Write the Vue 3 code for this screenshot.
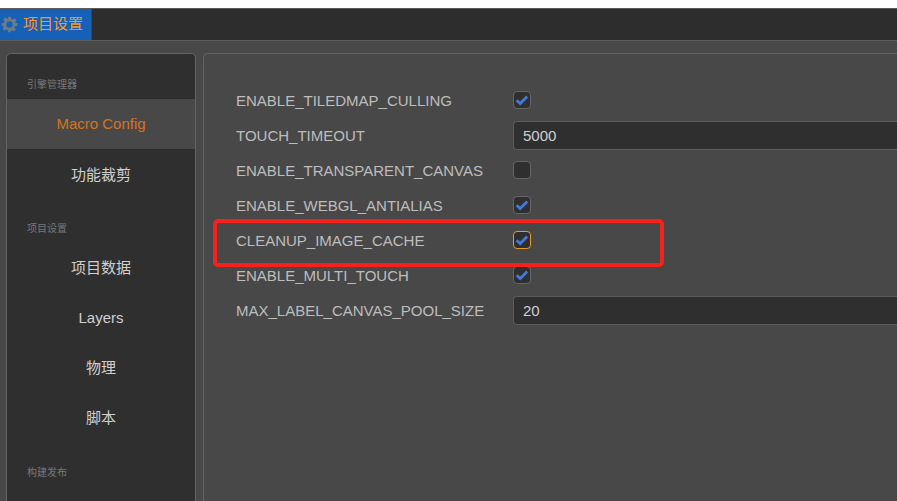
<template>
  <div class="page">
    <div class="top-strip"></div>
    <div class="tabbar">
      <div class="tab">
        <svg class="gear" viewBox="0 0 24 24" width="17" height="17">
          <path
            fill="#6f7c88"
            fill-rule="evenodd"
            d="M10 1h4l.6 3.1 1.9.8 2.6-1.8 2.8 2.8-1.8 2.6.8 1.9L23 10v4l-3.1.6-.8 1.9 1.8 2.6-2.8 2.8-2.6-1.8-1.9.8L13.9 23h-3.8l-.6-3.1-1.9-.8-2.6 1.8-2.8-2.8 1.8-2.6-.8-1.9L1 14v-4l3.1-.6.8-1.9-1.8-2.6 2.8-2.8 2.6 1.8 1.9-.8zM12 7.5a4.5 4.5 0 1 0 0 9 4.5 4.5 0 0 0 0-9z"
          />
        </svg>
        <span>项目设置</span>
      </div>
    </div>
    <div class="body">
      <aside class="sidebar">
        <template v-for="group in groups" :key="group.title">
          <h4>{{ group.title }}</h4>
          <div
            v-for="item in group.items"
            :key="item"
            class="nav-item"
            :class="{ active: item === 'Macro Config', cjk: isCjk(item) }"
          >
            {{ item }}
          </div>
        </template>
      </aside>
      <main class="panel">
        <div v-for="row in rows" :key="row.name" class="row">
          <label>{{ row.name }}</label>
          <div v-if="row.value" class="input">{{ row.value }}</div>
          <div v-else class="check" :class="{ focus: row.focus }">
            <svg v-if="row.checked" viewBox="0 0 18 18" width="18" height="18">
              <path
                d="M3.6 9.2l3.6 3.4 7-7.2"
                fill="none"
                stroke="#4379dc"
                stroke-width="2.8"
              />
            </svg>
          </div>
        </div>
      </main>
      <div class="highlight"></div>
    </div>
  </div>
</template>

<script setup>
const groups = [
  { title: "引擎管理器", items: ["Macro Config", "功能裁剪"] },
  { title: "项目设置", items: ["项目数据", "Layers", "物理", "脚本"] },
  { title: "构建发布", items: [] },
];

const rows = [
  { name: "ENABLE_TILEDMAP_CULLING", checked: true },
  { name: "TOUCH_TIMEOUT", value: "5000" },
  { name: "ENABLE_TRANSPARENT_CANVAS", checked: false },
  { name: "ENABLE_WEBGL_ANTIALIAS", checked: true },
  { name: "CLEANUP_IMAGE_CACHE", checked: true, focus: true },
  { name: "ENABLE_MULTI_TOUCH", checked: true },
  { name: "MAX_LABEL_CANVAS_POOL_SIZE", value: "20" },
];

const isCjk = (text) => /[^\x00-\x7f]/.test(text);
</script>

<style scoped>
.page {
  width: 897px;
  height: 501px;
  overflow: hidden;
  display: flex;
  flex-direction: column;
  background: #484848;
  font-family: "Liberation Sans", "Noto Sans CJK SC", sans-serif;
}
.top-strip {
  height: 8px;
  background: #fff;
}
.tabbar {
  height: 33px;
  flex: none;
  box-sizing: border-box;
  display: flex;
  background: #2d2d2d;
  border-top: 1px solid #5a5a5a;
  border-bottom: 1px solid #5e5e5e;
}
.tab {
  width: 92px;
  display: flex;
  align-items: center;
  gap: 5px;
  padding: 0 0 4px 1px;
  box-sizing: border-box;
  background: #1760b8;
  border-right: 1px solid #444;
  color: #f79a1e;
  font-size: 15px;
}
.gear {
  margin-top: 4px;
}
.body {
  position: relative;
  flex: 1;
  display: flex;
  gap: 7px;
  padding: 12px 0 0 6px;
  min-height: 0;
}
.sidebar {
  width: 190px;
  height: 520px;
  flex: none;
  box-sizing: border-box;
  padding-top: 2px;
  background: #2f2f2f;
  border: 1px solid #636363;
  border-radius: 5px;
}
h4 {
  margin: 0;
  height: 43px;
  box-sizing: border-box;
  padding: 23px 0 0 20px;
  line-height: 13px;
  font-size: 10px;
  font-weight: normal;
  color: #777;
}
h4:first-child {
  padding-top: 22px;
}
h4:last-child {
  padding-top: 24px;
}
.nav-item {
  height: 50px;
  box-sizing: border-box;
  display: flex;
  align-items: center;
  justify-content: center;
  font-size: 15px;
  color: #cfcfcf;
}
.nav-item.cjk {
  padding-bottom: 2px;
}
.nav-item.active {
  padding-bottom: 2px;
  background: #484848;
  color: #d2761f;
}
.panel {
  flex: 1;
  height: 520px;
  box-sizing: border-box;
  padding: 28.5px 0 0 32px;
  background: #484848;
  border: 1px solid #636363;
  border-right: none;
  border-radius: 5px 0 0 0;
}
.row {
  height: 35px;
  display: flex;
  align-items: center;
}
label {
  width: 277px;
  flex: none;
  font-size: 15px;
  color: #bdbdbd;
}
.check {
  width: 18px;
  height: 18px;
  box-sizing: border-box;
  background: #2f2f2f;
  border: 1px solid #666;
  border-radius: 4px;
  display: flex;
  align-items: center;
  justify-content: center;
  flex: none;
}
.check.focus {
  border-color: #e39b2c;
}
.check svg {
  flex: none;
}
.input {
  flex: 1;
  height: 29px;
  box-sizing: border-box;
  padding-left: 9px;
  line-height: 27px;
  font-size: 15px;
  color: #d0d0d0;
  background: #2f2f2f;
  border: 1px solid #5c5c5c;
  border-right: none;
  border-radius: 4px 0 0 4px;
}
.highlight {
  position: absolute;
  left: 213px;
  top: 178px;
  width: 451px;
  height: 48px;
  box-sizing: border-box;
  border: 4px solid #f6211a;
  border-radius: 5px;
}
</style>

<style>
body {
  background: #fff;
}
</style>
